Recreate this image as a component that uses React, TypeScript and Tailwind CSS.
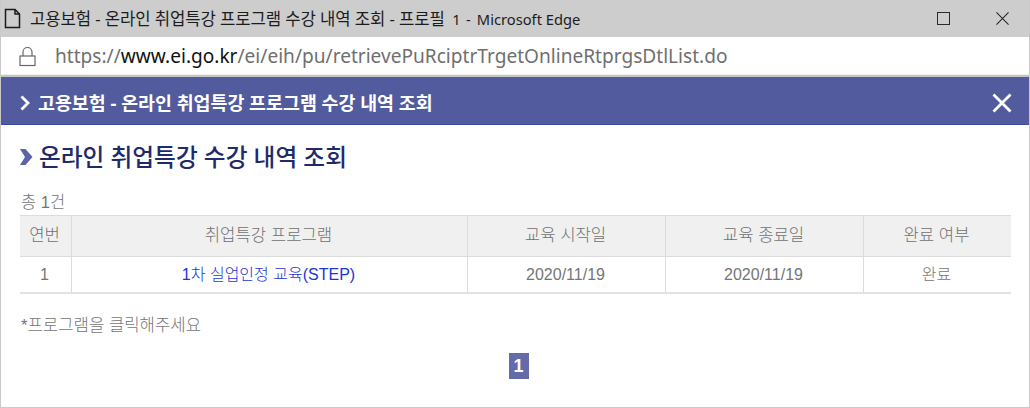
const columns = [
  { label: '연번', width: 'w-[52px]', value: '1' },
  { label: '취업특강 프로그램', width: 'w-[396px]', value: '1차 실업인정 교육(STEP)', link: true },
  { label: '교육 시작일', width: 'w-[198px]', value: '2020/11/19' },
  { label: '교육 종료일', width: 'w-[198px]', value: '2020/11/19' },
  { label: '완료 여부', width: 'flex-1', value: '완료' },
];

const sans = "font-['Liberation_Sans','Noto_Sans_CJK_KR',sans-serif]";
const chrome = "font-['Noto_Sans','Noto_Sans_CJK_KR',sans-serif]";

export default function App() {
  return (
    <div className={`flex h-[408px] w-[1030px] flex-col overflow-hidden border-x border-b border-[#c9c9c9] bg-white ${sans}`}>
      <div className={`flex h-[37px] shrink-0 items-center bg-[#cdcdcd] pl-[3px] pr-[20px] text-[16.7px] text-[#1c1c1c] ${chrome}`}>
        <svg width="17" height="21" viewBox="0 0 17 21" fill="none" stroke="#1a1a1a" strokeWidth="1.5" className="mr-[9px]">
          <path d="M1.5 1.5h9.5l4.5 4.5v13.5h-14z" />
          <path d="M11 1.5v4.5h4.5" />
        </svg>
        <span className="flex-1 tracking-[-0.1px]">
          고용보험 - 온라인 취업특강 프로그램 수강 내역 조회 - 프로필
          <span className="ml-[3px] text-[14.7px] tracking-[0.7px]"> 1 - </span>
          <span className="ml-[1px] text-[14.7px] tracking-normal">Microsoft Edge</span>
        </span>
        <span className="mr-[46px] h-[13px] w-[13px] border-[1.5px] border-[#2a2a2a]" />
        <svg width="13" height="13" viewBox="0 0 14 14" stroke="#222" strokeWidth="1.1">
          <path d="M0.5 0.5l13 13M13.5 0.5l-13 13" />
        </svg>
      </div>
      <div className={`flex h-[38px] shrink-0 items-center border-b border-[#f0f0f0] pl-[18px] pt-[2px] text-[19.1px] text-[#6f6f6f] ${chrome}`}>
        <svg width="17" height="21" viewBox="0 0 17 21" fill="none" stroke="#666" strokeWidth="1.2" className="mr-[19px]">
          <rect x="1" y="10" width="15" height="9.5" />
          <path d="M4 10V6a4.5 4.5 0 0 1 9 0v4" />
        </svg>
        <span>
          https://<span className="text-[#111]">www.ei.go.kr</span>/ei/eih/pu/retrievePuRciptrTrgetOnlineRtprgsDtlList.do
        </span>
      </div>
      <div className="h-[2px] shrink-0 bg-[#c4c4c4]" />
      <div className={`flex h-[48px] shrink-0 items-center justify-between border-b border-[#3d4a9a] bg-[#515b9d] pl-[19px] pr-[17px] pt-[5px] text-white ${chrome}`}>
        <div className="flex items-center gap-[8px] text-[18.4px] font-bold">
          <svg width="10" height="16" viewBox="0 0 10 16" fill="none" stroke="#fff" strokeWidth="2.8">
            <path d="M1.5 1.5L8 8l-6.5 6.5" />
          </svg>
          <span>고용보험 - 온라인 취업특강 프로그램 수강 내역 조회</span>
        </div>
        <svg width="20" height="20" viewBox="0 0 20 20" stroke="#fff" strokeWidth="2.8">
          <path d="M1.5 1.5l17 17M18.5 1.5l-17 17" />
        </svg>
      </div>
      <div className="flex flex-1 flex-col px-[19px]">
        <div className={`mt-[17px] flex items-center gap-[6px] text-[23.7px] font-medium leading-[30px] text-[#1f2a6b] ${chrome}`}>
          <svg width="13" height="16" viewBox="0 0 13 16" fill="#5b64a6">
            <path d="M0 0h5.5l7 8-7 8H0l5-8z" />
          </svg>
          <span>온라인 취업특강 수강 내역 조회</span>
        </div>
        <div className="mt-[17px] pl-[1px] text-[16.5px] font-light leading-[26px] text-[#757575]">총 1건</div>
        <div className="w-[991px] text-[16px] font-light text-[#757575]">
          <div className="flex h-[42px] items-center border-y border-[#dcdcdc] bg-[#f0f0f0] text-[16.7px] text-[#707070]">
            {columns.map((col) => (
              <div key={col.label} className={`${col.width} flex h-full items-center justify-center border-r border-[#dcdcdc] pr-[2px] last:border-r-0`}>
                {col.label}
              </div>
            ))}
          </div>
          <div className="flex h-[37px] items-center border-b-2 border-[#e2e2e2]">
            {columns.map((col) => (
              <div
                key={col.label}
                className={`${col.width} flex h-full items-center justify-center border-r border-[#dcdcdc] pr-[2px] last:border-r-0 ${col.link ? 'text-[#1a35d8]' : ''}`}
              >
                {col.value}
              </div>
            ))}
          </div>
        </div>
        <div className="mt-[21px] pl-[1px] text-[16.7px] font-light leading-[22px] text-[#757575]">*프로그램을 클릭해주세요</div>
        <div className="mt-[16px] flex justify-center pl-[7px]">
          <span className="flex h-[26px] w-[20px] items-center justify-center bg-[#636ca8] text-[18px] font-bold text-white">1</span>
        </div>
      </div>
    </div>
  );
}
